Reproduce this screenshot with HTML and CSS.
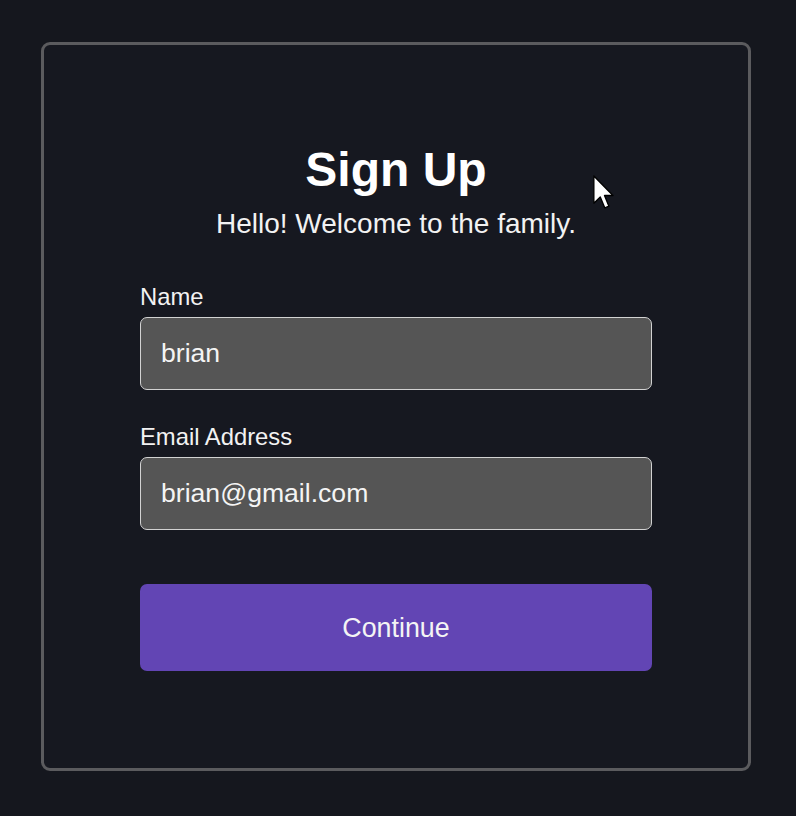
FILE: index.html
```html
<!DOCTYPE html>
<html lang="en">
<head>
<meta charset="utf-8">
<title>Sign Up</title>
<link rel="stylesheet" href="styles.css">
</head>
<body>
<main class="card">
  <form class="form">
    <h1 class="title">Sign Up</h1>
    <p class="subtitle">Hello! Welcome to the family.</p>
    <label class="label" for="name">Name</label>
    <input class="input" id="name" type="text" value="brian">
    <label class="label label-second" for="email">Email Address</label>
    <input class="input" id="email" type="email" value="brian@gmail.com">
    <button class="button" type="button">Continue</button>
  </form>
</main>
<svg class="cursor" width="22" height="36" viewBox="0 0 13 21" aria-hidden="true">
  <path d="M0.5 0.5 L0.5 16.5 L4.3 12.8 L7 19.3 L9.4 18.3 L6.8 12 L11.8 12 Z" fill="#ffffff" stroke="#000000" stroke-width="0.8" stroke-linejoin="round"/>
</svg>
</body>
</html>
```

FILE: styles.css
```css
html, body {
  margin: 0;
  padding: 0;
}

body {
  background: #15171e;
  font-family: "Liberation Sans", Arial, sans-serif;
  color: #ffffff;
  min-height: 816px;
  position: relative;
}

.card {
  box-sizing: border-box;
  margin: 42px 0 0 41px;
  width: 710px;
  height: 729px;
  border: 3px solid #5b5b5e;
  border-radius: 9px;
  background: #161820;
  padding: 101px 0 0 96px;
}

.form {
  width: 512px;
  display: flex;
  flex-direction: column;
}

.title {
  margin: 0;
  font-size: 48px;
  line-height: 48px;
  font-weight: 700;
  text-align: center;
}

.subtitle {
  margin: 16px 0 0;
  font-size: 28px;
  line-height: 28px;
  text-align: center;
  color: #f2f2f2;
}

.label {
  margin-top: 47px;
  font-size: 23.8px;
  line-height: 24px;
  color: #f2f2f2;
}

.label-second {
  margin-top: 35px;
}

.input {
  box-sizing: border-box;
  margin-top: 8px;
  width: 512px;
  height: 73px;
  padding: 0 20px;
  background: #555555;
  border: 1px solid #d2d2d2;
  border-radius: 7px;
  font-family: "Liberation Sans", Arial, sans-serif;
  font-size: 26.6px;
  line-height: 28px;
  color: #f4f4f4;
  outline: none;
}

.button {
  box-sizing: border-box;
  margin-top: 54px;
  width: 512px;
  height: 87px;
  border: none;
  border-radius: 7px;
  background: #6245b4;
  color: #f4f4f4;
  font-family: "Liberation Sans", Arial, sans-serif;
  font-size: 26.8px;
  line-height: 28px;
  cursor: pointer;
}

.cursor {
  position: absolute;
  left: 593px;
  top: 175px;
}
```
